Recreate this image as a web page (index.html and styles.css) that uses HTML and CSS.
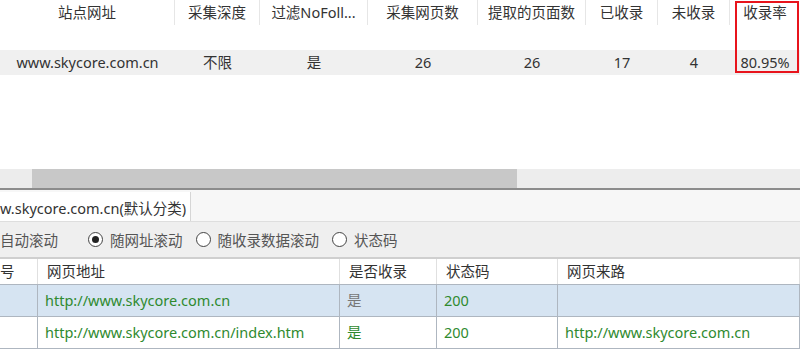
FILE: index.html
```html
<!DOCTYPE html>
<html lang="zh-CN">
<head>
<meta charset="utf-8">
<title>收录查询</title>
<link rel="stylesheet" href="styles.css">
</head>
<body>
<div class="page">
  <section class="summary">
    <div class="sum-grid sum-head">
      <div class="hc">站点网址</div>
      <div class="hc">采集深度</div>
      <div class="hc">过滤NoFoll...</div>
      <div class="hc">采集网页数</div>
      <div class="hc">提取的页面数</div>
      <div class="hc">已收录</div>
      <div class="hc">未收录</div>
      <div class="hc last">收录率</div>
    </div>
    <div class="sum-gap"></div>
    <div class="sum-grid sum-row">
      <div class="dc">www.skycore.com.cn</div>
      <div class="dc">不限</div>
      <div class="dc">是</div>
      <div class="dc">26</div>
      <div class="dc">26</div>
      <div class="dc">17</div>
      <div class="dc">4</div>
      <div class="dc">80.95%</div>
    </div>
    <div class="highlight"></div>
  </section>
  <div class="hscroll">
    <div class="hs-left"></div>
    <div class="hs-thumb"></div>
    <div class="hs-rest"></div>
  </div>
  <div class="tabstrip">
    <div class="tab">w.skycore.com.cn(默认分类)</div>
  </div>
  <div class="options">
    <span class="opt-text first">自动滚动</span>
    <span class="radio checked"></span><span class="opt-text">随网址滚动</span>
    <span class="radio"></span><span class="opt-text">随收录数据滚动</span>
    <span class="radio"></span><span class="opt-text">状态码</span>
  </div>
  <div class="detail">
    <div class="dt-grid dt-head">
      <div class="c">号</div>
      <div class="c">网页地址</div>
      <div class="c">是否收录</div>
      <div class="c">状态码</div>
      <div class="c">网页来路</div>
    </div>
    <div class="dt-grid dt-row sel">
      <div class="c"></div>
      <div class="c green">http://www.skycore.com.cn</div>
      <div class="c grey">是</div>
      <div class="c green">200</div>
      <div class="c"></div>
    </div>
    <div class="dt-grid dt-row">
      <div class="c"></div>
      <div class="c green">http://www.skycore.com.cn/index.htm</div>
      <div class="c green">是</div>
      <div class="c green">200</div>
      <div class="c green">http://www.skycore.com.cn</div>
    </div>
  </div>
</div>
</body>
</html>
```

FILE: styles.css
```css
* { box-sizing: border-box; }
html, body { margin: 0; padding: 0; background: #fff; }
body {
  font-family: "Noto Sans", "Noto Sans CJK SC", sans-serif;
  font-size: 14.5px;
  color: #333;
}
.page { width: 800px; height: 350px; overflow: hidden; }

.summary { position: relative; height: 169px; }
.sum-grid {
  display: grid;
  grid-template-columns: 175px 85px 108px 110px 108px 72px 72px 70px;
}
.sum-head { height: 25px; }
.hc {
  text-align: center;
  line-height: 24px;
  border-right: 1px solid #e6e6e6;
  height: 25px;
  white-space: nowrap;
  color: #333;
}
.hc.last { border-right: none; }
.sum-gap { height: 25px; }
.sum-row { height: 25px; background: #f0f0f0; }
.dc { text-align: center; line-height: 25px; white-space: nowrap; color: #333; }
.highlight {
  position: absolute;
  left: 735px; top: 1px;
  width: 64px; height: 72px;
  border: 2px solid #e8141c;
}

.hscroll { display: flex; height: 21px; background: #ededed; border-bottom: 2px solid #8c8c8c; }
.hs-left { width: 32px; background: #ececec; }
.hs-thumb { width: 485px; background: #c8c8c8; }
.hs-rest { flex: 1; }

.tabstrip {
  height: 32px;
  background: #f7f7f7;
  padding-top: 2px;
  border-bottom: 1px solid #dedede;
  display: flex;
}
.tab {
  width: 191px;
  background: #fff;
  border-right: 1px solid #d6d6d6;
  padding-top: 3px;
  line-height: 26px;
  white-space: nowrap;
  color: #333;
}

.options {
  height: 37px;
  background: #efefef;
  border-bottom: 2px solid #cfcfcf;
  display: flex;
  align-items: center;
  color: #555;
}
.opt-text { white-space: nowrap; margin-right: 13px; }
.opt-text.first { margin-right: 30px; }
.radio {
  width: 15px; height: 15px;
  border: 1.5px solid #444;
  border-radius: 50%;
  margin-right: 7px;
  display: inline-flex;
  align-items: center;
  justify-content: center;
  background: #fff;
  flex: none;
}
.radio.checked::after {
  content: "";
  width: 7px; height: 7px;
  border-radius: 50%;
  background: #222;
}

.dt-grid {
  display: grid;
  grid-template-columns: 38px 302px 97px 121px 242px;
}
.dt-head { height: 26px; border-bottom: 1px solid #aeb6c0; }
.dt-head .c { border-right: 1px solid #e0e0e0; line-height: 25px; padding-left: 9px; color: #333; white-space: nowrap; }
.dt-head .c:first-child { padding-left: 0; }
.dt-row { height: 32px; border-bottom: 1px solid #aeb6c0; }
.dt-row .c { border-right: 1px solid #aeb6c0; line-height: 31px; padding-left: 7px; white-space: nowrap; }
.dt-row.sel { background: #d6e4f2; }
.green { color: #2f8a2f; }
.grey { color: #777; }
```
